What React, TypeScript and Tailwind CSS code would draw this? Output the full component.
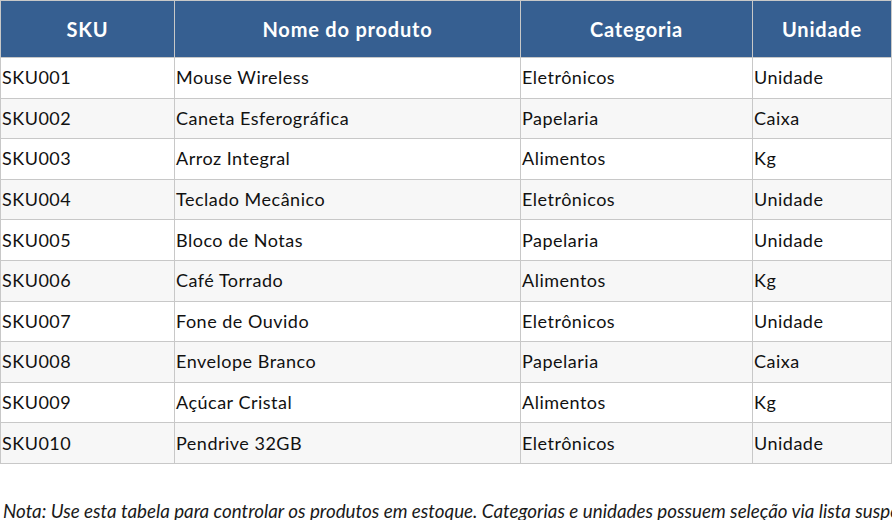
const rows = [
  ["SKU001", "Mouse Wireless", "Eletrônicos", "Unidade"],
  ["SKU002", "Caneta Esferográfica", "Papelaria", "Caixa"],
  ["SKU003", "Arroz Integral", "Alimentos", "Kg"],
  ["SKU004", "Teclado Mecânico", "Eletrônicos", "Unidade"],
  ["SKU005", "Bloco de Notas", "Papelaria", "Unidade"],
  ["SKU006", "Café Torrado", "Alimentos", "Kg"],
  ["SKU007", "Fone de Ouvido", "Eletrônicos", "Unidade"],
  ["SKU008", "Envelope Branco", "Papelaria", "Caixa"],
  ["SKU009", "Açúcar Cristal", "Alimentos", "Kg"],
  ["SKU010", "Pendrive 32GB", "Eletrônicos", "Unidade"],
];

const headers = ["SKU", "Nome do produto", "Categoria", "Unidade"];

export default function App() {
  return (
    <div className="h-[520px] w-[892px] overflow-hidden bg-white font-['Lato',sans-serif] text-[#111]">
      <table className="w-[891px] table-fixed border-collapse">
        <colgroup>
          <col className="w-[174px]" />
          <col className="w-[346px]" />
          <col className="w-[232px]" />
          <col className="w-[139px]" />
        </colgroup>
        <thead>
          <tr className="h-[57px] bg-[#365f91]">
            {headers.map((h) => (
              <th
                key={h}
                className="border border-[#c8c8c8] text-center text-[20px] font-bold tracking-[0.8px] text-white"
              >
                {h}
              </th>
            ))}
          </tr>
        </thead>
        <tbody>
          {rows.map((r, i) => (
            <tr key={r[0]} className={`h-[40.6px] ${i % 2 === 1 ? "bg-[#f7f7f7]" : "bg-white"}`}>
              {r.map((c, j) => (
                <td
                  key={j}
                  className="whitespace-nowrap border border-[#c8c8c8] px-[1px] text-[18px] tracking-[0.5px]"
                >
                  {c}
                </td>
              ))}
            </tr>
          ))}
        </tbody>
      </table>
      <p className="mt-[33px] whitespace-nowrap pl-[3px] text-[18.8px] leading-[28px] italic text-[#1a1a1a]">
        Nota: Use esta tabela para controlar os produtos em estoque. Categorias e unidades possuem seleção via lista suspensa.
      </p>
    </div>
  );
}
